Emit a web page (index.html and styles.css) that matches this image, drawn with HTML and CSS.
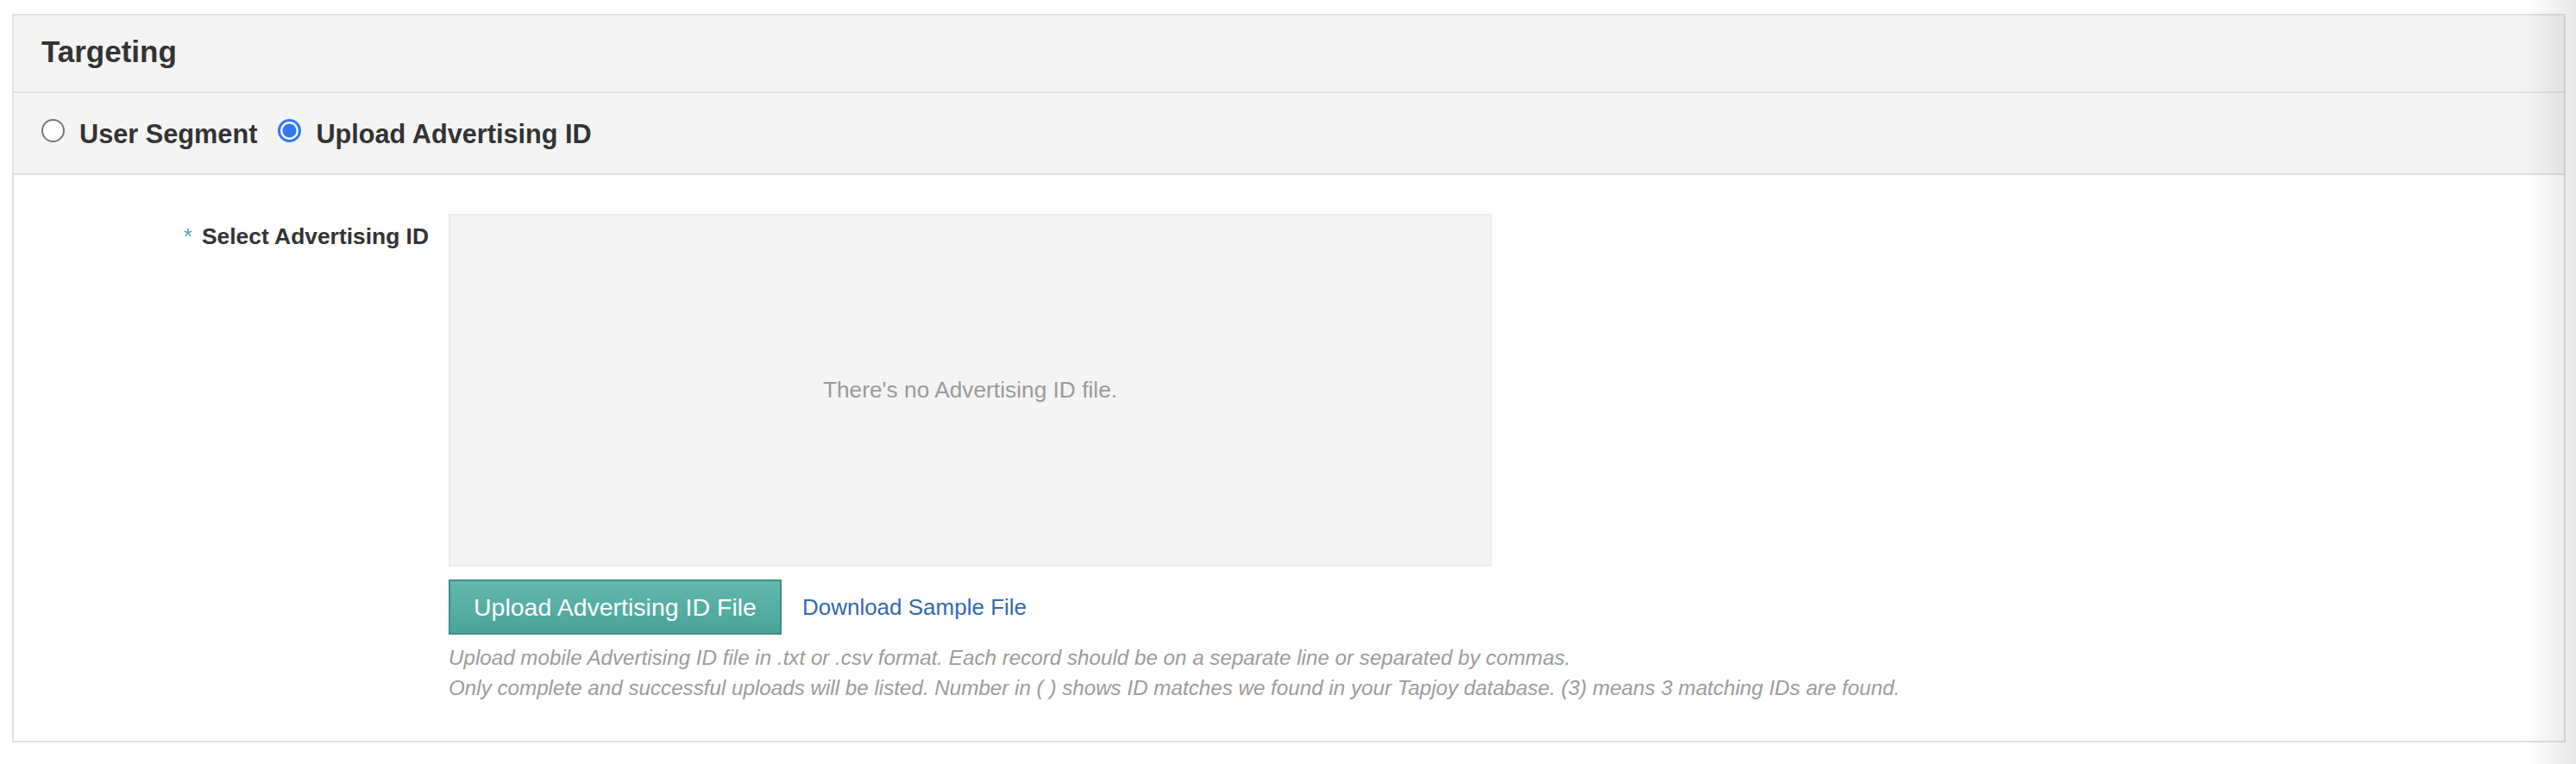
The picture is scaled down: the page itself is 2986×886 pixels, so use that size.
FILE: index.html
```html
<!DOCTYPE html>
<html lang="en">
<head>
<meta charset="utf-8">
<title>Targeting</title>
<link rel="stylesheet" href="styles.css">
</head>
<body>
<div class="panel">
  <div class="panel-heading">
    <h3 class="panel-title">Targeting</h3>
  </div>
  <div class="panel-toolbar">
    <label class="option"><input type="radio" name="target" class="radio"><span>User Segment</span></label>
    <label class="option"><input type="radio" name="target" class="radio" checked><span>Upload Advertising ID</span></label>
  </div>
  <div class="panel-body">
    <div class="form-row">
      <label class="form-label"><span class="req">*</span>Select Advertising ID</label>
      <div class="form-field">
        <div class="dropzone">There's no Advertising ID file.</div>
        <div class="actions">
          <button class="btn-upload" type="button">Upload Advertising ID File</button>
          <a class="link" href="#">Download Sample File</a>
        </div>
        <p class="help">Upload mobile Advertising ID file in .txt or .csv format. Each record should be on a separate line or separated by commas.<br>Only complete and successful uploads will be listed. Number in ( ) shows ID matches we found in your Tapjoy database. (3) means 3 matching IDs are found.</p>
      </div>
    </div>
  </div>
</div>
<div class="edge-shade"></div>
</body>
</html>
```

FILE: styles.css
```css
html, body {
  margin: 0;
  background: #ffffff;
}

body {
  padding: 16px 12px 0 14px;
  font-family: "Liberation Sans", Arial, Helvetica, sans-serif;
  color: #333333;
}

.panel {
  border: 2px solid #e0e0e0;
  background: #ffffff;
}

.panel-heading {
  background: #f4f4f4;
  border-bottom: 2px solid #e0e0e0;
  padding: 22px 0 26px 32px;
}

.panel-title {
  margin: 0;
  font-size: 35px;
  line-height: 40px;
  font-weight: bold;
  color: #333333;
}

.panel-toolbar {
  background: #f4f4f4;
  border-bottom: 2px solid #e0e0e0;
  padding: 30px 0 27px 32px;
  display: flex;
  align-items: flex-start;
}

.option {
  display: inline-flex;
  align-items: flex-start;
  margin-right: 24px;
  font-size: 30.7px;
  line-height: 36px;
  font-weight: bold;
  color: #333333;
}

.radio {
  appearance: none;
  -webkit-appearance: none;
  margin: 0 17px 0 0;
  width: 27px;
  height: 27px;
  border-radius: 50%;
  border: 2px solid #767676;
  background: #ffffff;
  box-sizing: border-box;
  flex: none;
}

.radio:checked {
  border: 3px solid #3478f6;
  background: radial-gradient(circle, #3478f6 0 7.5px, #ffffff 8.5px);
}

.panel-body {
  padding: 45px 0 44px 0;
}

.form-row {
  display: flex;
  align-items: flex-start;
}

.form-label {
  width: 481px;
  flex: none;
  text-align: right;
  padding-top: 8px;
  font-size: 26.4px;
  line-height: 36px;
  font-weight: bold;
  color: #333333;
  margin-right: 23px;
}

.req {
  color: #4aaaa0;
  font-weight: normal;
  margin-right: 11px;
}

.form-field {
  display: flex;
  flex-direction: column;
  align-items: flex-start;
}

.dropzone {
  width: 1209px;
  height: 409px;
  box-sizing: border-box;
  border: 2px solid #ececec;
  background: #f4f4f4;
  display: flex;
  align-items: center;
  justify-content: center;
  font-size: 26.3px;
  color: #9a9a9a;
}

.actions {
  margin-top: 15px;
  display: flex;
  align-items: center;
}

.btn-upload {
  height: 64px;
  padding: 0 27px;
  border: 2px solid #3f8c84;
  border-radius: 0;
  background: linear-gradient(#62b8b0, #4aa39a);
  color: #ffffff;
  font-family: "Liberation Sans", Arial, Helvetica, sans-serif;
  font-size: 28.5px;
  line-height: 1;
}

.link {
  margin-left: 24px;
  font-size: 26px;
  color: #3467b0;
  text-decoration: none;
}

.help {
  margin: 9px 0 0 0;
  font-size: 24.2px;
  line-height: 35px;
  font-style: italic;
  color: #9b9b9b;
}

.edge-shade {
  position: fixed;
  top: 0;
  right: 0;
  bottom: 0;
  width: 60px;
  background: linear-gradient(to right, rgba(0, 0, 0, 0), rgba(0, 0, 0, 0.09));
  pointer-events: none;
}
```
